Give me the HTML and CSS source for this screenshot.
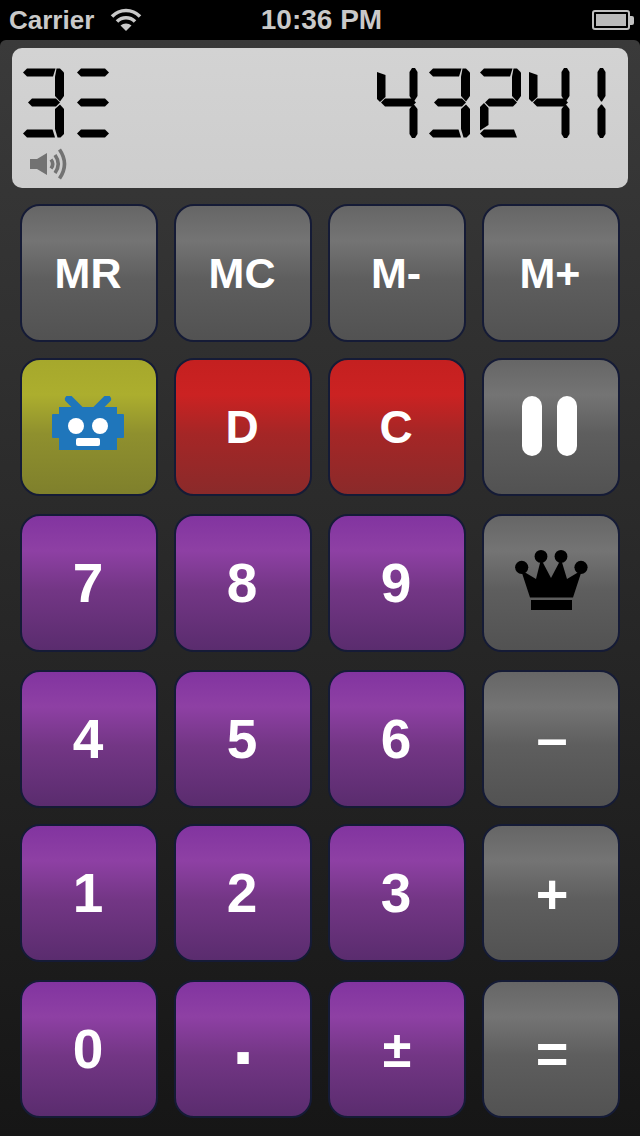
FILE: index.html
```html
<!DOCTYPE html>
<html lang="en">
<head>
    <meta charset="UTF-8">
    <meta name="viewport" content="width=device-width, initial-scale=1.0">
    <title>Calculator</title>
    <link rel="stylesheet" href="styles.css">
</head>
<body>
    <div class="status-bar">
        <div class="status-left">
            <span>Carrier</span>
            <svg class="wifi" width="32" height="24" viewBox="0 0 32 24">
                <path d="M2 8.5 C10 0.5 22 0.5 30 8.5" />
                <path d="M7 13.5 C12 8.5 20 8.5 25 13.5" />
                <path class="wifi-dot" d="M16 23 L10.5 17.5 C13.5 14.7 18.5 14.7 21.5 17.5 Z" />
            </svg>
        </div>
        <span class="status-time">10:36 PM</span>
        <div class="status-right">
            <div class="battery"><div class="battery-level"></div></div>
            <div class="battery-nub"></div>
        </div>
    </div>

    <div class="container">
        <div class="lcd">
            <div class="readout" role="img" aria-label="3 and 43241">
                <div class="digit-group">
                    <div class="digit">
                        <span class="seg seg-a"></span><span class="seg seg-b seg-join"></span>
                        <span class="seg seg-g"></span><span class="seg seg-c seg-join"></span>
                        <span class="seg seg-d"></span>
                    </div>
                    <div class="digit digit-bars">
                        <span class="seg seg-bar seg-bar-top"></span>
                        <span class="seg seg-bar seg-bar-mid"></span>
                        <span class="seg seg-bar seg-bar-low"></span>
                    </div>
                </div>
                <div class="digit-group">
                    <div class="digit">
                        <span class="seg seg-f"></span><span class="seg seg-b"></span>
                        <span class="seg seg-g seg-wide"></span><span class="seg seg-c"></span>
                    </div>
                    <div class="digit">
                        <span class="seg seg-a"></span><span class="seg seg-b seg-join"></span>
                        <span class="seg seg-g"></span><span class="seg seg-c seg-join"></span>
                        <span class="seg seg-d"></span>
                    </div>
                    <div class="digit digit-close">
                        <span class="seg seg-a"></span><span class="seg seg-b seg-join"></span>
                        <span class="seg seg-g"></span><span class="seg seg-e"></span>
                        <span class="seg seg-d seg-long"></span>
                    </div>
                    <div class="digit digit-closer">
                        <span class="seg seg-f"></span><span class="seg seg-b"></span>
                        <span class="seg seg-g seg-wide"></span><span class="seg seg-c"></span>
                    </div>
                    <div class="digit digit-one">
                        <span class="seg seg-b"></span><span class="seg seg-c"></span>
                    </div>
                </div>
            </div>
            <svg class="speaker" width="38" height="32" viewBox="0 0 38 32">
                <polygon points="0,11 7,11 17,5 17,27 7,21 0,21" />
                <path d="M21 11.5 Q24.5 16 21 20.5" />
                <path d="M25 7 Q31.5 16 25 25" />
                <path d="M29.5 1.5 Q39.5 16 29.5 30.5" />
            </svg>
        </div>

        <div class="keypad">
            <div class="key-row">
                <button class="key key-grey">MR</button>
                <button class="key key-grey">MC</button>
                <button class="key key-grey">M-</button>
                <button class="key key-grey">M+</button>
            </div>
            <div class="key-row">
                <button class="key key-olive">
                    <svg class="robot" width="72" height="54" viewBox="0 0 72 54">
                        <path class="robot-antenna" d="M17 3 L29 15 M55 3 L43 15" />
                        <rect class="robot-body" x="7" y="11" width="58" height="43" />
                        <rect class="robot-body" x="0" y="18" width="72" height="24" rx="1" />
                        <circle class="robot-face" cx="24" cy="30" r="8" />
                        <circle class="robot-face" cx="48" cy="30" r="8" />
                        <rect class="robot-face" x="24" y="42" width="24" height="8" rx="2" />
                    </svg>
                </button>
                <button class="key key-red key-mid">D</button>
                <button class="key key-red key-mid">C</button>
                <button class="key key-grey">
                    <span class="pause"><span></span><span></span></span>
                </button>
            </div>
            <div class="key-row key-row-low">
                <button class="key key-purple key-big">7</button>
                <button class="key key-purple key-big">8</button>
                <button class="key key-purple key-big">9</button>
                <button class="key key-grey">
                    <svg class="crown" width="73" height="60" viewBox="0 0 73 60">
                        <circle cx="6.7" cy="17.3" r="6.6" />
                        <circle cx="26" cy="6.4" r="6.4" />
                        <circle cx="46" cy="6.4" r="6.4" />
                        <circle cx="66" cy="17.3" r="6.6" />
                        <polygon points="6,20 21,29 26,9 36,28 46,9 52,29 67,20 58,47.5 15,47.5" />
                        <rect x="16" y="50" width="41" height="10" />
                    </svg>
                </button>
            </div>
            <div class="key-row key-row-low">
                <button class="key key-purple key-big">4</button>
                <button class="key key-purple key-big">5</button>
                <button class="key key-purple key-big">6</button>
                <button class="key key-grey key-sym key-minus">–</button>
            </div>
            <div class="key-row">
                <button class="key key-purple key-big">1</button>
                <button class="key key-purple key-big">2</button>
                <button class="key key-purple key-big">3</button>
                <button class="key key-grey key-sym">+</button>
            </div>
            <div class="key-row key-row-low">
                <button class="key key-purple key-big">0</button>
                <button class="key key-purple key-dot">.</button>
                <button class="key key-purple key-sym key-plusminus">±</button>
                <button class="key key-grey key-sym key-equals">=</button>
            </div>
        </div>
    </div>
</body>
</html>
```

FILE: styles.css
```css
* {
    box-sizing: border-box;
}
body {
    margin: 0;
    width: 640px;
    height: 1136px;
    overflow: hidden;
    background: #000;
    font-family: "Liberation Sans", Arial, sans-serif;
}

/* status bar */
.status-bar {
    height: 40px;
    display: grid;
    grid-template-columns: 1fr auto 1fr;
    align-items: center;
    padding: 0 6px 0 9px;
    color: #c9c9c9;
    font-weight: bold;
}
.status-left {
    display: flex;
    align-items: center;
    gap: 16px;
    font-size: 26px;
}
.status-time {
    font-size: 28px;
}
.status-right {
    display: flex;
    align-items: center;
    justify-content: flex-end;
}
.wifi path {
    fill: none;
    stroke: #c9c9c9;
    stroke-width: 3.6;
}
.wifi path.wifi-dot {
    fill: #c9c9c9;
    stroke: none;
}
.battery {
    width: 38px;
    height: 20px;
    padding: 2px;
    border: 2px solid #c0c0c0;
    border-radius: 3px;
}
.battery-level {
    height: 100%;
    background: #bbb;
}
.battery-nub {
    width: 4px;
    height: 9px;
    background: #c0c0c0;
    border-radius: 0 2px 2px 0;
}

.container {
    height: 1096px;
    padding: 8px 12px 0;
    border-radius: 6px 6px 0 0;
    background: linear-gradient(#3a3a3a, #161616);
}

/* lcd */
.lcd {
    height: 140px;
    padding: 20px 22px 0 11px;
    border-radius: 10px;
    background: linear-gradient(#d3d3d3, #cdcdcd);
}
.readout {
    display: flex;
    justify-content: space-between;
}
.digit-group {
    display: flex;
    gap: 11px;
}
.digit {
    position: relative;
    flex: none;
    width: 41px;
    height: 70px;
}
.digit-bars {
    width: 32px;
    margin-left: 2px;
}
.digit-close {
    margin-left: -1px;
}
.digit-closer {
    margin-left: -3px;
}
.digit-one {
    width: 9px;
    margin-left: 16px;
}
.seg {
    position: absolute;
    background: #000;
}
.seg-a {
    left: 0;
    top: 0;
    width: 33px;
    height: 9px;
    clip-path: polygon(0 4.5px, 4px 0.5px, 32.5px 0.5px, 30px 8.5px, 4px 8.5px);
}
.seg-d {
    left: 0;
    top: 61px;
    width: 33px;
    height: 9px;
    clip-path: polygon(0 4.5px, 4px 0.5px, 29.5px 0.5px, 32px 8.5px, 4px 8.5px);
}
.seg-long {
    width: 38px;
    clip-path: polygon(0 4.5px, 4px 0.5px, 34px 0.5px, 37px 8.5px, 4px 8.5px);
}
.seg-g {
    left: 5px;
    top: 30px;
    width: 32px;
    height: 9px;
    clip-path: polygon(0 4.5px, 4px 0.5px, 28px 0.5px, 32px 4.5px, 28px 8.5px, 4px 8.5px);
}
.seg-wide {
    left: 4px;
    width: 35px;
    clip-path: polygon(0 4.5px, 4px 0.5px, 31px 0.5px, 35px 4.5px, 31px 8.5px, 4px 8.5px);
}
.seg-b {
    right: 0;
    top: 0;
    width: 9px;
    height: 34px;
    clip-path: polygon(3px 0, 6px 0, 8.5px 4px, 8.5px 28px, 5px 33.5px, 4px 33.5px, 0.5px 28px, 0.5px 4px);
}
.seg-c {
    right: 0;
    top: 36px;
    width: 9px;
    height: 34px;
    clip-path: polygon(4px 0.5px, 5px 0.5px, 8.5px 5px, 8.5px 30px, 6px 34px, 3px 34px, 0.5px 30px, 0.5px 5px);
}
.seg-b.seg-join {
    clip-path: polygon(1.5px 0.5px, 5px 0.5px, 9px 4.5px, 9px 28px, 5px 33.5px, 0 28px, 0 8.5px);
}
.seg-c.seg-join {
    clip-path: polygon(5px 0.5px, 9px 5px, 9px 30px, 5.5px 33.5px, 2.5px 33.5px, 0 25px, 0 5px);
}
.seg-e {
    left: 0;
    top: 35px;
    width: 9px;
    height: 28px;
    clip-path: polygon(0 4px, 4px 0, 8.5px 5px, 8.5px 22px, 0 27.5px);
}
.seg-f {
    left: 0;
    top: 4px;
    width: 9px;
    height: 30px;
    clip-path: polygon(0 0, 8.5px 3px, 8.5px 25px, 3px 30px, 0 27px);
}
.seg-bar {
    left: 0;
    width: 32px;
    height: 9px;
    clip-path: polygon(0 4.5px, 4px 0.5px, 28px 0.5px, 32px 4.5px, 28px 8.5px, 4px 8.5px);
}
.seg-bar-top {
    top: 0;
}
.seg-bar-mid {
    top: 30px;
}
.seg-bar-low {
    top: 61px;
}
.speaker {
    display: block;
    margin: 10px 0 0 7px;
}
.speaker polygon {
    fill: #727272;
}
.speaker path {
    fill: none;
    stroke: #727272;
    stroke-width: 3.6;
}

/* keys */
.keypad {
    display: flex;
    flex-direction: column;
    gap: 16px;
    margin-top: 16px;
    padding: 0 8px;
}
.key-row {
    display: flex;
    gap: 16px;
}
.key-row-low {
    margin-top: 2px;
}
.key {
    width: 138px;
    height: 138px;
    padding: 0 2px 0 0;
    display: flex;
    align-items: center;
    justify-content: center;
    border: 2px solid #151b36;
    border-radius: 20px;
    color: #fff;
    font-family: inherit;
    font-size: 43px;
    font-weight: bold;
}
.key-mid {
    font-size: 46px;
}
.key-big {
    font-size: 55px;
}
.key-sym {
    padding: 0 0 0 2px;
    font-size: 56px;
}
.key-minus {
    padding-bottom: 4px;
}
.key-equals {
    padding-top: 8px;
}
.key-plusminus {
    padding: 0;
    font-size: 52px;
}
.key-dot {
    padding: 0 0 24px;
    font-size: 80px;
}
.key-grey {
    background: linear-gradient(#666 0, #747474 26%, #5e5e5e 55%, #525252 100%);
}
.key-olive {
    background: linear-gradient(#a6a82c 0, #acae2e 26%, #8f902e 55%, #7f802c 100%);
}
.key-red {
    background: linear-gradient(#c42020 0, #cb2222 26%, #a52626 55%, #8a2a2a 100%);
}
.key-purple {
    background: linear-gradient(#8234a0 0, #8e40a4 26%, #733685 55%, #5a2c6e 100%);
}
.pause {
    display: flex;
    gap: 15px;
    margin: 0 1px 2px 0;
}
.pause span {
    width: 20px;
    height: 60px;
    border-radius: 10px;
    background: #fff;
}
.robot {
    margin-bottom: 8px;
}
.crown {
    margin: 0 0 6px 2px;
}
.robot-antenna {
    fill: none;
    stroke: #1f76bb;
    stroke-width: 8;
    stroke-linecap: round;
}
.robot-body {
    fill: #1f76bb;
}
.robot-face {
    fill: #fff;
}
```
